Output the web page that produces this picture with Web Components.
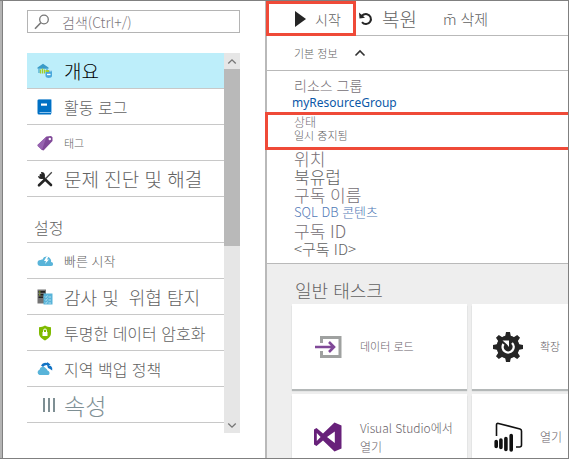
<!DOCTYPE html>
<html lang="ko">
<head>
<meta charset="utf-8">
<title>개요</title>
<style>
body { margin: 0; font-family: "Noto Sans CJK KR", "Liberation Sans", sans-serif; font-weight: 300; color: #626262; }
</style>
</head>
<body>
<portal-shell></portal-shell>
<script>
const ICONS = {
  search: ['0 0 16 16', '<circle cx="10" cy="5.5" r="4.3" fill="none" stroke="#777" stroke-width="1.3"/><path d="M6.8 8.8L1 14.8" stroke="#777" stroke-width="1.6"/>'],
  overview: ['0 0 16 16', '<path d="M.5 4.5L6 .8l5.500 3.700v1.200H.5z" fill="#3a9bc8"/><path d="M2 5v5M10 5v2" stroke="#5ab4d9" stroke-width="1.500"/><path d="M3.500 6.500v4M5.500 5.500v5M7.500 6.500v4" stroke="#a2cf2a" stroke-width="1.300"/><path d="M8.500 7h4v2h-4z" fill="#a2cf2a"/><path d="M8.500 9v4c0 2.500 6.500 2.500 6.500 0V7.500c-1-.8-2.500-.8-3 0V9z" fill="#4aa8dc"/><path d="M10 11.500h3.500" stroke="#fff" stroke-width="1.300"/><ellipse cx="13.500" cy="7.800" rx="1.700" ry=".8" fill="#b9dff2"/>'],
  log: ['0 0 16 16', '<path d="M1.500.5H15v14H2z" fill="#8ec3ec"/><path d="M.5 1.500Q.5.500 1.800.500H14V13H2.500v1H14v1.500H2Q.5 15.500.5 14z" fill="#0070c4"/><path d="M4 4.500h6v2.200H4z" fill="#fff"/>'],
  tag: ['0 0 16 16', '<path d="M1 9.500L9.500 1.500 14 1l1.500 1.200V6L6.500 15.500 5 15 .500 10.800z" fill="#804998"/><path d="M1 9.500L9.500 1.500 5 15 .5 10.800z" fill="#9763b0"/><circle cx="12.800" cy="4" r="1.200" fill="#fff"/>'],
  tools: ['0 0 16 16', '<path d="M3.800 4.200L14 14" stroke="#252525" stroke-width="2.600" stroke-linecap="round"/><path d="M4 1a3.500 3.500 0 1 1-3 4l2.400.6 1.300-1.300z" fill="#252525"/><path d="M14.800 1.200L8.500 7.800" stroke="#444" stroke-width="1.300"/><path d="M7 9.500L2 14.300" stroke="#252525" stroke-width="2.600" stroke-linecap="round"/>'],
  cloud: ['0 0 16 16', '<path d="M3.500 13a3 3 0 0 1 0-6C4.500 6 5 6.500 5.500 6.500a4.300 4.300 0 0 1 8-.5c1 1.500.5 3 .5 3a2 2 0 0 1 .2 4z" fill="#59b4d9"/><path d="M9.500 3.500L7 8h2l-1 3 4-4.500H10l1.500-3z" fill="#fff"/>'],
  audit: ['0 0 16 16', '<path d="M.5.500H9v14H.5z" fill="#737373"/><path d="M1.500 2h6.500v1.800H1.500zM1.500 5h6.500v1.500H1.500zM1.500 7.600H6V9H1.500z" fill="#222"/><path d="M2 3h1.500M2 5.800h1.500" stroke="#a5ce2c"/><path d="M6.500 4.500H15.500v11h-9z" fill="#59b4d9"/><path d="M8 7.500l1 1 1.500-2M8 10.500l1 1 1.500-2M8 13.500l1 1 1.500-2M11.500 8h2.500M11.500 11h2.500M11.500 14h2.500" fill="none" stroke="#c8e8f5" stroke-width=".8"/>'],
  shield: ['0 0 16 16', '<path d="M8 .5c2 1.300 3.500 1.500 6 1.700V8c0 4-3.500 6-6 7.500C5.500 14 2 12 2 8V2.200C4.500 2 6 1.800 8 .5z" fill="#7fba00"/><path d="M5.500 7h5v4h-5z" fill="#fff"/><path d="M6.500 7V5.500a1.500 1.500 0 0 1 3 0V7" fill="none" stroke="#fff"/>'],
  backup: ['0 0 16 16', '<path d="M4 4.500Q6 1 9.500 2l1-.8 3 2.300-3 2-.5-1.500Q7.500 4 6 6zM10 4l4 1q2 2 1.200 4.500L13 8l-2-1z" fill="#1072c4"/><path d="M2.500 14a2.800 2.800 0 0 1 0-5.300A3.500 3.500 0 0 1 9 7.500c1.500 1 1.500 2 1.500 2a2.500 2.500 0 0 1 1 4.500z" fill="#59b4d9"/>'],
  bars: ['0 0 16 16', '<path d="M7 1v14M12 1v14M17 1v14" stroke="#7e8f94" stroke-width="2"/>'],
  play: ['0 0 12 16', '<path d="M1 0L12 8 1 16z" fill="#252525"/>'],
  undo: ['0 0 16 16', '<path d="M3.500 5Q6 2.700 9 3.200a5 5 0 1 1-5 8" fill="none" stroke="#252525" stroke-width="2"/><path d="M1 1.500l.5 6 5.500-.7z" fill="#252525"/>'],
  up: ['0 0 12 8', '<path d="M1.500 6.500L6 2l4.500 4.500" fill="none" stroke="currentColor" stroke-width="1.600"/>'],
  down: ['0 0 12 8', '<path d="M1.500 1.500L6 6l4.500-4.500" fill="none" stroke="currentColor" stroke-width="1.600"/>'],
  load: ['0 0 32 32', '<path d="M9.500 12V6.500H28v19H9.500V20" fill="none" stroke="#9fa1a0" stroke-width="3"/><path d="M3 16h19M17 11l5 5-5 5" fill="none" stroke="#804998" stroke-width="2.600"/>'],
  gear: ['0 0 32 32', '<g fill="#252525"><path d="M13 6l1-5h4l1 5zM13 26l1 5h4l1-5z"/><path d="M13 6l1-5h4l1 5zM13 26l1 5h4l1-5z" transform="rotate(45 16 16)"/><path d="M13 6l1-5h4l1 5zM13 26l1 5h4l1-5z" transform="rotate(90 16 16)"/><path d="M13 6l1-5h4l1 5zM13 26l1 5h4l1-5z" transform="rotate(135 16 16)"/><circle cx="16" cy="16" r="11.500"/></g><path d="M11.500 13a5.500 5.500 0 1 0 8.500-1" fill="none" stroke="#fff" stroke-width="2.400"/><path d="M10.500 9.500h6.500v6.500l-2-2.500z" fill="#fff"/>'],
  vs: ['0 0 32 32', '<path fill-rule="evenodd" d="M22.500 1.500L29.500 4.500v23l-7 3L11 19.500 4.500 25 2 23.500v-15L4.500 7 11 12.500zM4.800 12v8l3.800-4zM22.800 10.500L15 16l7.800 6z" fill="#68217a"/>'],
  pbi: ['0 0 32 32', '<path d="M4.500 15V4q0-2 2-1.500L28 8q1.500.5 1.500 2v14q0 2-2 2H24" fill="none" stroke="#111" stroke-width="1.600"/><path d="M4.200 20.500v5M8.900 19v7.500M13.900 17.500v11M19.200 14.500v14.500" stroke="#111" stroke-width="3.600" stroke-linecap="round"/>']
};

function define(name, css, html) {
  customElements.define(name, class extends HTMLElement {
    connectedCallback() {
      if (this.shadowRoot) return;
      const root = this.attachShadow({ mode: 'open' });
      const t = document.createElement('template');
      t.innerHTML = `<style>*{box-sizing:border-box}${css}</style>${typeof html === 'function' ? html(this) : html}`;
      root.append(t.content.cloneNode(true));
    }
  });
}

define('ui-icon',
  ':host{display:block;flex:none;width:16px;height:16px}svg{display:block;width:100%;height:100%;overflow:visible}',
  el => { const [box, body] = ICONS[el.getAttribute('name')]; return `<svg viewBox="${box}" aria-hidden="true">${body}</svg>`; });

define('search-box', `
  :host{display:block}
  label{display:flex;align-items:center;gap:12px;height:23px;border:1px solid #b4b4b4;padding:0 6px}
  input{flex:1;min-width:0;border:0;outline:0;padding:0;background:none;font:inherit;font-size:14px;line-height:20px;color:#6e6e6e}
  input::placeholder{color:#7c757c;opacity:1}`,
  '<label><ui-icon name="search"></ui-icon><input type="text" aria-label="검색" placeholder="검색(Ctrl+/)"></label>');

define('nav-item', `
  :host{display:block;border-bottom:1px solid #c8c8c8}
  :host([active]){background:#bdeefa;color:#000}
  :host([muted]){color:#7e8f94}
  a{display:flex;align-items:center;gap:11px;height:35px;padding-left:10px;color:inherit;text-decoration:none;white-space:pre;font-size:16px;line-height:24px}
  :host([size=xs]) a{font-size:11px}
  :host([size=s]) a{font-size:13px}
  :host([size=m]) a{font-size:18px}
  :host([size=l]) a{font-size:19px}
  :host([size=xl]) a{font-size:23px}`,
  el => `<a href="#"><ui-icon name="${el.getAttribute('icon')}"></ui-icon><span><slot></slot></span></a>`);

define('scroll-bar', `
  :host{display:flex;flex-direction:column;width:16px;background:#e6e6e6}
  button{display:grid;place-items:center;height:16px;border:0;padding:0;background:none;color:#777}
  ui-icon{width:10px;height:7px}
  .track{flex:1}
  .thumb{height:51%;background:#b9b9b9}`,
  '<button aria-label="위로"><ui-icon name="up"></ui-icon></button><div class="track"><div class="thumb"></div></div><button aria-label="아래로"><ui-icon name="down"></ui-icon></button>');

define('side-menu', `
  :host{display:block;padding:9px 25px 0}
  .area{display:flex;margin-top:20px}
  nav{flex:1;min-width:0;padding-bottom:10px}
  h2{display:flex;align-items:end;height:46px;margin:0;padding:0 0 3px 7px;border-bottom:1px solid #c8c8c8;font-size:16px;line-height:24px;font-weight:inherit}`,
  `<search-box></search-box>
  <div class="area"><nav>
    <nav-item icon="overview" size="l" active>개요</nav-item>
    <nav-item icon="log">활동 로그</nav-item>
    <nav-item icon="tag" size="xs">태그</nav-item>
    <nav-item icon="tools" size="l">문제 진단 및 해결</nav-item>
    <h2>설정</h2>
    <nav-item icon="cloud" size="s">빠른 시작</nav-item>
    <nav-item icon="audit" size="m">감사 및  위협 탐지</nav-item>
    <nav-item icon="shield">투명한 데이터 암호화</nav-item>
    <nav-item icon="backup">지역 백업 정책</nav-item>
    <nav-item icon="bars" size="xl" muted>속성</nav-item>
  </nav><scroll-bar></scroll-bar></div>`);

define('tool-bar', `
  :host{display:flex;height:35px;border-bottom:1px solid #b9b9b9}
  button{display:flex;align-items:center;height:35px;border:0;padding:0;background:none;font:inherit;color:inherit;white-space:nowrap}
  .start{width:90px;margin-left:-1px;border:3px solid #ef4a38;padding-left:25px;gap:9px;font-size:14px}
  .start ui-icon{width:12px}
  .restore{padding-left:2px;gap:8px;font-size:19px}
  .delete{padding-left:26px;gap:4px;font-size:15px}`,
  `<button class="start"><ui-icon name="play"></ui-icon>시작</button>
  <button class="restore"><ui-icon name="undo"></ui-icon>복원</button>
  <button class="delete"><span>m̄</span><span>삭제</span></button>`);

define('essentials-panel', `
  :host{display:block}
  .toggle{display:flex;align-items:center;gap:16px;width:100%;height:35px;border:0;border-bottom:1px solid #b9b9b9;padding:0 27px;background:none;font:inherit;font-size:11px;color:inherit}
  .toggle ui-icon{width:12px;height:8px;color:#333}
  dl,dt,dd{margin:0}
  dl{color:#756e75}
  dd{color:#626262}
  div{padding:0 27px}
  a{color:#4f78b6;text-decoration:none}
  .group{padding-top:6px;height:41px;font-size:14px;line-height:16px}
  .group a{margin-left:-2px;font-family:"Noto Sans","Noto Sans CJK KR",sans-serif;font-weight:400;font-size:12px;color:#0a58a8}
  .status{margin-left:-2px;padding-left:26px;height:38px;border:3px solid #ef4a38;border-right:0;font-size:12px;line-height:13px}
  .status dd{font-size:11px;line-height:15px}
  .wide{font-size:17px;line-height:18px}
  .name dd{font-size:13px;line-height:15px}
  .id{padding-top:3px;height:44px}
  .id dd{font-size:15px;line-height:17px}`,
  `<button class="toggle" aria-expanded="true">기본 정보<ui-icon name="up"></ui-icon></button>
  <dl>
    <div class="group"><dt>리소스 그룹</dt><dd><a href="#">myResourceGroup</a></dd></div>
    <div class="status"><dt>상태</dt><dd>일시 중지됨</dd></div>
    <div class="wide"><dt>위치</dt><dd>북유럽</dd></div>
    <div class="wide name"><dt>구독 이름</dt><dd><a href="#">SQL DB 콘텐츠</a></dd></div>
    <div class="wide id"><dt>구독 ID</dt><dd>&lt;구독 ID&gt;</dd></div>
  </dl>`);

define('task-card', `
  :host{display:block;background:#fff;box-shadow:0 2px 1px #b4b8b8}
  a{display:flex;align-items:center;gap:16px;height:85px;padding:0 8px 0 20px;color:#685f68;text-decoration:none;font-size:12px;line-height:19px}
  ui-icon{width:32px;height:32px}
  :host([size=xs]) a{font-size:11px}`,
  el => `<a href="#"><ui-icon name="${el.getAttribute('icon')}"></ui-icon><span><slot></slot></span></a>`);

define('common-tasks', `
  :host{display:block;flex:1;min-height:0;border-top:1px solid #b9b9b9;background:#eee;padding-left:25px;overflow:hidden}
  h2{margin:0;padding:14px 0 2px 3px;font-size:18px;line-height:24px;font-weight:inherit}
  .grid{display:grid;grid-template-columns:repeat(2,175px);gap:5px}`,
  `<h2>일반 태스크</h2>
  <div class="grid">
    <task-card icon="load" size="xs">데이터 로드</task-card>
    <task-card icon="gear" size="xs">확장</task-card>
    <task-card icon="vs">Visual Studio에서<br>열기</task-card>
    <task-card icon="pbi">열기</task-card>
  </div>`);

define('portal-shell', `
  :host{display:grid;grid-template-columns:265px 1fr;box-sizing:border-box;height:100vh;background:#fff;border:1px solid #808080;border-left:0;overflow:hidden}
  side-menu{border-left:2px solid #b4b4b4;box-shadow:inset 1px 0 #808080}
  main{display:flex;flex-direction:column;min-width:0;min-height:0;border-left:2px solid #b9b9b9}`,
  `<side-menu></side-menu>
  <main><tool-bar></tool-bar><essentials-panel></essentials-panel><common-tasks></common-tasks></main>`);
</script>
</body>
</html>
